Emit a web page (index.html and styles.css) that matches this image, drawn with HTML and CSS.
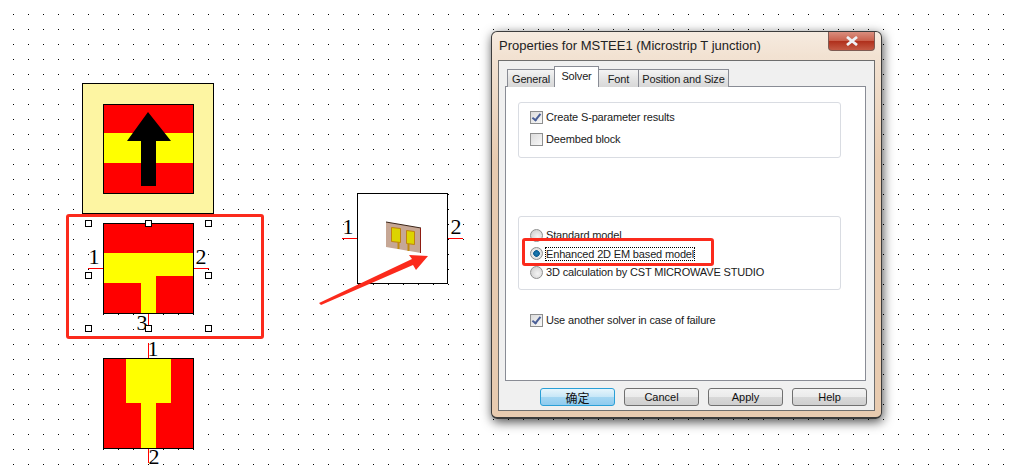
FILE: index.html
```html
<!DOCTYPE html>
<html lang="en">
<head>
<meta charset="UTF-8">
<meta name="viewport" content="width=device-width, initial-scale=1.0">
<title>Properties for MSTEE1</title>
<link rel="stylesheet" href="styles.css">
</head>
<body>
<div class="canvas">

  <!-- schematic blocks -->
  <svg class="schematic" width="1012" height="472" viewBox="0 0 1012 472">
    <!-- parameter block with up arrow -->
    <rect x="82.5" y="83.5" width="131" height="130" fill="#fdf5a2" stroke="#000"/>
    <rect x="103.5" y="104.5" width="90" height="89" fill="#f00" stroke="#000"/>
    <rect x="104" y="133" width="89" height="30" fill="#ff0"/>
    <path d="M148 112 L171 141 L156 141 L156 186 L141 186 L141 141 L127 141 Z" fill="#000"/>

    <!-- T junction -->
    <path d="M88 268.5 H103 M194 268.5 H209 M148.5 314 V329" stroke="#f00" fill="none"/>
    <rect x="103.5" y="223.5" width="90" height="90" fill="#f00" stroke="#000"/>
    <path d="M104 253 H193 V276 H156 V313 H141 V283 H104 Z" fill="#ff0"/>
    <text class="pin" x="94" y="264" text-anchor="middle">1</text>
    <text class="pin" x="201" y="264" text-anchor="middle">2</text>
    <text class="pin" x="142" y="330" text-anchor="middle">3</text>
    <g class="handles">
      <rect x="85.5" y="220.5" width="6" height="6"/>
      <rect x="145.5" y="220.5" width="6" height="6"/>
      <rect x="205.5" y="220.5" width="6" height="6"/>
      <rect x="85.5" y="272.5" width="6" height="6"/>
      <rect x="205.5" y="272.5" width="6" height="6"/>
      <rect x="85.5" y="325.5" width="6" height="6"/>
      <rect x="145.5" y="325.5" width="6" height="6"/>
      <rect x="205.5" y="325.5" width="6" height="6"/>
    </g>

    <!-- taper -->
    <path d="M148.5 343 V358 M148.5 448 V463" stroke="#f00" fill="none"/>
    <rect x="103.5" y="358.5" width="90" height="90" fill="#f00" stroke="#000"/>
    <path d="M126 359 H171 V403 H156 V448 H141 V403 H126 Z" fill="#ff0"/>
    <text class="pin" x="153" y="356" text-anchor="middle">1</text>
    <text class="pin" x="154" y="464" text-anchor="middle">2</text>

    <!-- 3D model block -->
    <path d="M342 238.5 H357 M448 238.5 H463" stroke="#f00" fill="none"/>
    <rect x="357.5" y="193.5" width="90" height="90" fill="#fff" stroke="#000"/>
    <text class="pin" x="348" y="234" text-anchor="middle">1</text>
    <text class="pin" x="456" y="234" text-anchor="middle">2</text>
    <path d="M386 222 L421 228 V253 L386 247 Z" fill="#c6a795"/>
    <path d="M386 222 L421 228" stroke="#3a2418" fill="none"/>
    <path d="M420.5 228 V253" stroke="#8e1c12" fill="none"/>
    <path d="M398.5 241 V249 M408.5 243 V251" stroke="#c08a10" stroke-width="2" fill="none"/>
    <path d="M391.5 227.5 L400.5 228.5 V242.5 L391.5 241.5 Z" fill="#dcd400" stroke="#c0820f"/>
    <path d="M406.5 230.5 L414.5 231.5 V244.5 L406.5 243.5 Z" fill="#dcd400" stroke="#c0820f"/>
  </svg>

  <!-- properties window -->
  <div class="dialog">
    <div class="titlebar">
      <span class="title">Properties for MSTEE1 (Microstrip T junction)</span>
      <div class="close-btn">
        <svg width="14" height="10" viewBox="0 0 14 10"><path d="M2 1 L12 9 M12 1 L2 9" stroke="#eef2f6" stroke-width="2.8"/></svg>
      </div>
    </div>
    <div class="client">
      <div class="tabs">
        <div class="tab tab-general">General</div>
        <div class="tab tab-active">Solver</div>
        <div class="tab tab-font">Font</div>
        <div class="tab tab-position">Position and Size</div>
      </div>
      <div class="page">
        <div class="group group-top">
          <div class="row"><span class="check checked"></span><span>Create S-parameter results</span></div>
          <div class="row"><span class="check"></span><span>Deembed block</span></div>
        </div>
        <div class="group group-model">
          <div class="row"><span class="radio"></span><span>Standard model</span></div>
          <div class="row"><span class="radio selected"></span><span class="focused">Enhanced 2D EM based model</span></div>
          <div class="row"><span class="radio"></span><span>3D calculation by CST MICROWAVE STUDIO</span></div>
        </div>
        <div class="row row-fallback"><span class="check checked"></span><span>Use another solver in case of failure</span></div>
      </div>
      <div class="buttons">
        <button class="btn btn-default">确定</button>
        <button class="btn">Cancel</button>
        <button class="btn">Apply</button>
        <button class="btn">Help</button>
      </div>
    </div>
  </div>

  <!-- red annotations on top of the screenshot -->
  <div class="mark mark-block"></div>
  <div class="mark mark-option"></div>
  <svg class="pointer" width="1012" height="472" viewBox="0 0 1012 472">
    <path d="M319 303 L412 259 L409 255 L428 256 L416 270 L413 265 L321 305 Z" fill="#fb2a1c"/>
  </svg>
</div>
</body>
</html>
```

FILE: styles.css
```css
/* Schematic canvas */
body {
  margin: 0;
  background: #fff;
}
.canvas {
  position: relative;
  width: 1012px;
  height: 472px;
  overflow: hidden;
  background-image: conic-gradient(at 1px 1px, transparent 75%, #000 0);
  background-size: 15px 15px;
  background-position: 13px 14px;
}
.schematic,
.pointer {
  position: absolute;
  left: 0;
  top: 0;
}
.pin {
  font-family: "Liberation Serif", serif;
  font-size: 22px;
  fill: #000;
}
.handles rect {
  fill: #fff;
  stroke: #000;
}

/* Annotations */
.mark {
  position: absolute;
  border: 3px solid #fb2a1c;
  border-radius: 3px;
  box-sizing: border-box;
}
.mark-block {
  left: 66px;
  top: 214px;
  width: 198px;
  height: 125px;
}
.mark-option {
  left: 522px;
  top: 238px;
  width: 192px;
  height: 28px;
}

/* Properties window */
.dialog {
  position: absolute;
  left: 491px;
  top: 31px;
  width: 391px;
  height: 388px;
  box-sizing: border-box;
  padding: 0 6px 6px;
  display: flex;
  flex-direction: column;
  background: linear-gradient(#f6ebe0, #f2e2d2 24px, #e8cbb0 130px, #e8cbb0);
  border: 1px solid #3c3c3c;
  border-bottom-width: 2px;
  border-radius: 6px;
  box-shadow: 1px 3px 11px rgba(0, 0, 0, 0.7);
  font-family: "Liberation Sans", sans-serif;
  font-size: 11px;
  letter-spacing: -0.16px;
  color: #1a1a1a;
}
.titlebar {
  height: 28px;
  flex: none;
  display: flex;
  justify-content: space-between;
  align-items: flex-start;
}
.title {
  margin: 6px 0 0 1px;
  font-size: 13px;
  letter-spacing: 0;
  color: #222;
}
.close-btn {
  width: 47px;
  height: 19px;
  display: flex;
  align-items: center;
  justify-content: center;
  background: linear-gradient(#d98e7e, #c9614d 48%, #b0301c 52%, #c45a44);
  border: 1px solid #7e5a52;
  border-top: none;
  border-radius: 0 0 4px 4px;
  box-sizing: border-box;
}
.client {
  flex: 1;
  display: flex;
  flex-direction: column;
  background: #f0f0f0;
  border: 1px solid #6e6e6e;
  padding: 0 8px 0 6px;
}
.tabs {
  height: 26px;
  flex: none;
  display: flex;
  align-items: flex-end;
  margin-bottom: -1px;
  padding-left: 2px;
  position: relative;
}
.tab {
  height: 18px;
  box-sizing: border-box;
  padding-top: 3px;
  text-align: center;
  white-space: nowrap;
  background: linear-gradient(#f4f4f4, #e4e4e4 50%, #d8d8d8);
  border: 1px solid #898c95;
  border-bottom: none;
  border-left: none;
}
.tab-general {
  width: 48px;
  border-left: 1px solid #898c95;
}
.tab-active {
  width: 45px;
  height: 21px;
  background: #fff;
  border-left: 1px solid #898c95;
  margin-left: -1px;
  position: relative;
  z-index: 1;
}
.tab-font {
  width: 40px;
}
.tab-position {
  width: 90px;
}
.page {
  height: 295px;
  box-sizing: border-box;
  flex: none;
  background: #fff;
  border: 1px solid #898c95;
  padding: 15px 24px 0 12px;
}
.group {
  border: 1px solid #d9dce2;
  border-radius: 3px;
  padding: 7px 0 0 11px;
}
.group-top {
  height: 56px;
  box-sizing: border-box;
}
.group-top .row + .row {
  margin-top: 8px;
}
.group-model {
  height: 74px;
  box-sizing: border-box;
  margin-top: 58px;
  padding-top: 11px;
}
.row {
  display: flex;
  align-items: center;
  gap: 3px;
  height: 14px;
}
.group-model .row + .row {
  margin-top: 4.5px;
}
.row-fallback {
  margin: 23px 0 0 12px;
}
.check {
  width: 13px;
  height: 13px;
  flex: none;
  box-sizing: border-box;
  border: 1px solid #8e8f8f;
  background: linear-gradient(135deg, #dcdcdc, #f8f8f8);
  position: relative;
}
.check.checked::after {
  content: "";
  position: absolute;
  left: 3px;
  top: 0;
  width: 3px;
  height: 7px;
  border: solid #4a5f97;
  border-width: 0 2px 2px 0;
  transform: rotate(38deg);
}
.radio {
  width: 13px;
  height: 13px;
  flex: none;
  box-sizing: border-box;
  border: 1px solid #8e8f8f;
  border-radius: 50%;
  background: radial-gradient(circle at 60% 60%, #f4f4f4, #c8c8c8);
}
.radio.selected {
  background: radial-gradient(circle, #1d7fb8 0, #0e5f94 3px, #e8e8e8 3.6px, #d8d8d8);
}
.focused {
  outline: 1px dotted #000;
  outline-offset: 0;
}
.buttons {
  flex: 1;
  display: flex;
  justify-content: flex-end;
  align-items: flex-start;
  gap: 9px;
  padding-top: 7px;
  margin-right: -1px;
}
.btn {
  width: 75px;
  height: 18px;
  padding: 0;
  font-family: "Liberation Sans", "Noto Sans CJK SC", sans-serif;
  font-size: 11px;
  color: #111;
  background: linear-gradient(#f3f3f3, #ebebeb 48%, #d8d8d8 52%, #cfcfcf);
  border: 1px solid #707070;
  border-radius: 3px;
}
.btn-default {
  border-color: #2a9fd6;
  font-size: 12px;
  background: linear-gradient(#e6f5fc, #c8e7f7 48%, #a4d6f2 52%, #8fcbee);
}
```
